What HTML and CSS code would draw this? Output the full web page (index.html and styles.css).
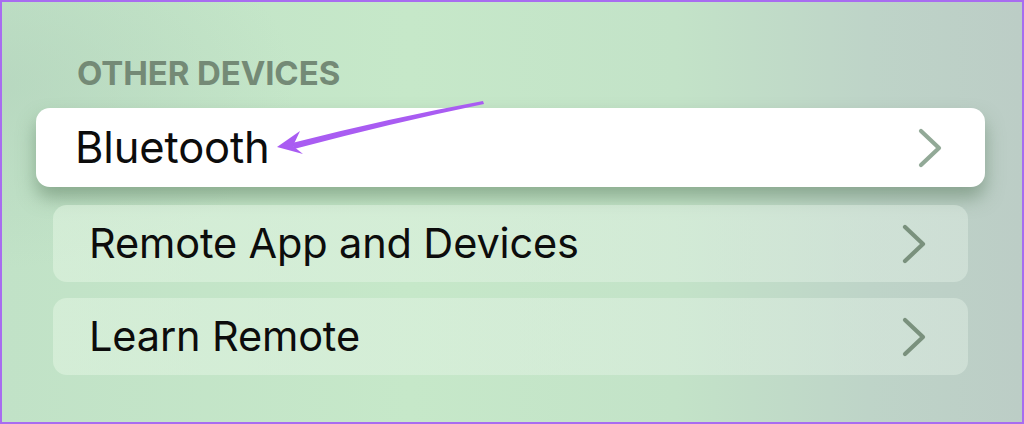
FILE: index.html
```html
<!DOCTYPE html>
<html lang="en">
<head>
<meta charset="utf-8">
<title>Other Devices</title>
<link rel="stylesheet" href="styles.css">
</head>
<body>
<div class="frame">
  <section class="group">
    <h2 class="group-title">OTHER DEVICES</h2>
    <ul class="rows">
      <li class="row row-focused">
        <span class="row-label">Bluetooth</span>
        <svg class="chevron" viewBox="0 0 24 40" width="24" height="40"><path d="M3 3 L21 20 L3 37"/></svg>
      </li>
      <li class="row">
        <span class="row-label">Remote App and Devices</span>
        <svg class="chevron" viewBox="0 0 24 40" width="24" height="40"><path d="M3 3 L21 20 L3 37"/></svg>
      </li>
      <li class="row">
        <span class="row-label">Learn Remote</span>
        <svg class="chevron" viewBox="0 0 24 40" width="24" height="40"><path d="M3 3 L21 20 L3 37"/></svg>
      </li>
    </ul>
  </section>
  <svg class="pointer" viewBox="0 0 1024 424" width="1024" height="424">
    <path class="pointer-shaft" d="M483 101 Q 390 118 292 143 L294 149 Q 392 123 484 104 Z"/>
    <path class="pointer-head" d="M277 147 L300 131 L293 146 L303 154 Z"/>
  </svg>
</div>
</body>
</html>
```

FILE: styles.css
```css
* {
  box-sizing: border-box;
}

html, body {
  margin: 0;
  padding: 0;
}

body {
  width: 1024px;
  height: 424px;
  overflow: hidden;
  font-family: Inter, "Noto Sans", sans-serif;
}

.frame {
  position: relative;
  width: 1024px;
  height: 424px;
  border: 2px solid #a86cf0;
  background:
    radial-gradient(ellipse 420px 260px at 0% 20%, rgba(176, 208, 186, 0.55), rgba(176, 208, 186, 0) 70%),
    linear-gradient(90deg, #c1e2c7 0%, #c6e8c9 40%, #c3e3c8 66%, #bed4c8 85%, #bccdc6 100%);
  padding: 51px 54px 0 51px;
}

.group-title {
  margin: 0 0 0 24px;
  font-size: 33px;
  line-height: 40px;
  font-weight: 700;
  color: #748a76;
  letter-spacing: -0.1px;
}

.rows {
  list-style: none;
  margin: 15px 0 0;
  padding: 0;
  display: flex;
  flex-direction: column;
  gap: 16px;
}

.row {
  display: flex;
  align-items: center;
  justify-content: space-between;
  height: 77px;
  padding: 0 42px 0 36px;
  border-radius: 14px;
  background: linear-gradient(90deg, rgba(226, 245, 226, 0.55), rgba(226, 240, 230, 0.45));
}

.row-focused {
  height: 79px;
  margin: 0 -17px 2px;
  padding: 0 43px 0 39px;
  background: #ffffff;
  box-shadow: 0 11px 18px rgba(85, 120, 90, 0.5);
}

.row-label {
  font-size: 41.5px;
  line-height: 1;
  font-weight: 400;
  color: #0c0c0c;
  letter-spacing: -0.15px;
}

.row-focused .row-label {
  font-size: 43.5px;
}

.chevron {
  flex: none;
  fill: none;
  stroke: #7a917d;
  stroke-width: 4.2;
  stroke-linecap: round;
  stroke-linejoin: round;
}

.row-focused .chevron {
  stroke: #92a997;
}

.pointer {
  position: absolute;
  left: -2px;
  top: -2px;
  pointer-events: none;
}

.pointer-shaft,
.pointer-head {
  fill: #a95cf2;
}
```
